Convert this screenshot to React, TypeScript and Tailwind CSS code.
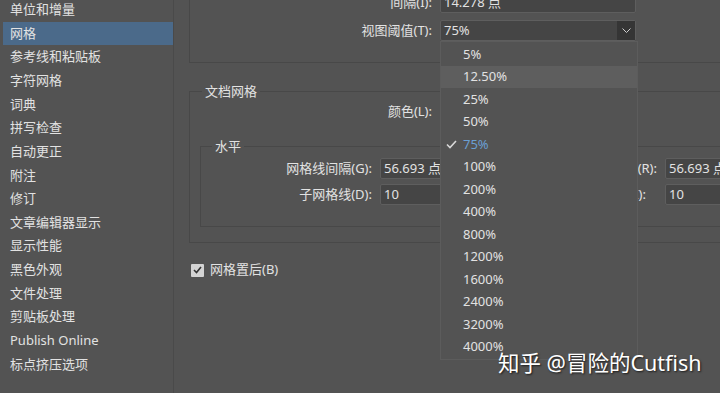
import React from 'react'

const navItems = [
  '单位和增量',
  '网格',
  '参考线和粘贴板',
  '字符网格',
  '词典',
  '拼写检查',
  '自动更正',
  '附注',
  '修订',
  '文章编辑器显示',
  '显示性能',
  '黑色外观',
  '文件处理',
  '剪贴板处理',
  'Publish Online',
  '标点挤压选项',
]

const zoomLevels = ['5%', '12.50%', '25%', '50%', '75%', '100%', '200%', '400%', '800%', '1200%', '1600%', '2400%', '3200%', '4000%']

const Field = ({ value, className = '' }: { value: string; className?: string }) => (
  <div className={`flex h-[21px] items-center rounded-[2px] border border-[#5e5e5e] bg-[#454545] px-[3px] text-[13px] text-[#e2e2e2] ${className}`}>
    {value}
  </div>
)

const Label = ({ children, className = '' }: { children: React.ReactNode; className?: string }) => (
  <div className={`flex h-[21px] items-center justify-end text-[13px] text-[#e2e2e2] ${className}`}>{children}</div>
)

const App = () => {
  return (
    <div className="relative flex h-[393px] w-[720px] overflow-hidden bg-[#535353] font-['Noto_Sans','Noto_Sans_CJK_SC',sans-serif]">
      {/* Sidebar */}
      <div className="w-[174px] shrink-0 border-r border-[#4a4a4a] pl-[3px]">
        <div className="mt-[-2px] flex flex-col">
          {navItems.map((item) => (
            <div
              key={item}
              className={`flex h-[23.65px] items-center px-[7px] text-[13px] text-[#e2e2e2] ${item === '网格' ? 'bg-[#4b6a8a]' : ''}`}
            >
              {item}
            </div>
          ))}
        </div>
      </div>

      {/* Main panel */}
      <div className="flex-1 pl-[15px]">
        <div className="mt-[-36px] w-[570px] border border-[#484848] pt-[27px] pb-[21px]">
          <div className="grid grid-cols-[242px_196px] gap-x-[8px] gap-y-[7px]">
            <Label>间隔(I):</Label>
            <Field value="14.278 点" />
            <Label>视图阈值(T):</Label>
            <div className="flex h-[21px] items-center rounded-[2px] border border-[#5e5e5e] bg-[#454545] text-[13px] text-[#e2e2e2]">
              <span className="flex-1 px-[3px]">75%</span>
              <span className="flex h-full w-[18px] items-center justify-center bg-[#353535]">
                <svg width="9" height="5" viewBox="0 0 9 5" fill="none">
                  <path d="M0.5 0.5 L4.5 4.5 L8.5 0.5" stroke="#cfcfcf" strokeWidth="1" />
                </svg>
              </span>
            </div>
          </div>
        </div>

        <fieldset className="mt-[19px] w-[570px] border border-[#484848] px-[10px] pb-[15px]">
          <legend className="ml-[2px] px-[3px] text-[13px] leading-[18px] text-[#e2e2e2]">文档网格</legend>
          <div className="mt-[1px] ml-[-10px] grid grid-cols-[242px_60px] gap-x-[8px]">
            <Label>颜色(L):</Label>
            <Field value="" />
          </div>

          <fieldset className="mt-[15px] border border-[#484848] pb-[21px]">
            <legend className="ml-[11px] px-[3px] text-[13px] leading-[18px] text-[#e2e2e2]">水平</legend>
            <div className="mt-[3px] grid grid-cols-[171px_170px_99px_120px] gap-x-[8px] gap-y-[5px]">
              <Label>网格线间隔(G):</Label>
              <Field value="56.693 点" />
              <Label>网格线间隔(R):</Label>
              <Field value="56.693 点" />
              <Label>子网格线(D):</Label>
              <Field value="10" />
              <Label className="pr-[11px]">子网格线(I):</Label>
              <Field value="10" />
            </div>
          </fieldset>
        </fieldset>

        <div className="mt-[17px] flex h-[20px] items-center gap-[6px] pl-[2px] text-[13px] text-[#e2e2e2]">
          <span className="flex h-[13px] w-[13px] items-center justify-center rounded-[1px] bg-[#d4d4d4]">
            <svg width="9" height="8" viewBox="0 0 9 8" fill="none">
              <path d="M1 4 L3.5 6.5 L8 1" stroke="#333" strokeWidth="1.6" />
            </svg>
          </span>
          网格置后(B)
        </div>
      </div>

      {/* Dropdown list */}
      <div className="absolute top-[41px] left-[440px] w-[198px] border border-[#5c5c5c] bg-[#535353] py-[1px]">
        {zoomLevels.map((z) => (
          <div
            key={z}
            className={`relative flex h-[22.5px] items-center pl-[22px] text-[13px] ${z === '12.50%' ? 'bg-[#5e5e5e]' : ''} ${z === '75%' ? 'text-[#6a9fd4]' : 'text-[#e2e2e2]'}`}
          >
            {z === '75%' && (
              <svg className="absolute left-[5px]" width="11" height="9" viewBox="0 0 11 9" fill="none">
                <path d="M1 4.5 L4 7.5 L10 1" stroke="#d8d8d8" strokeWidth="1.6" />
              </svg>
            )}
            {z}
          </div>
        ))}
      </div>

      {/* Watermark */}
      <div className="absolute top-[347px] left-[498px] text-[21.5px] text-white [text-shadow:1px_1px_2px_rgba(0,0,0,0.7)]">
        知乎 @冒险的Cutfish
      </div>
    </div>
  )
}

export default App
